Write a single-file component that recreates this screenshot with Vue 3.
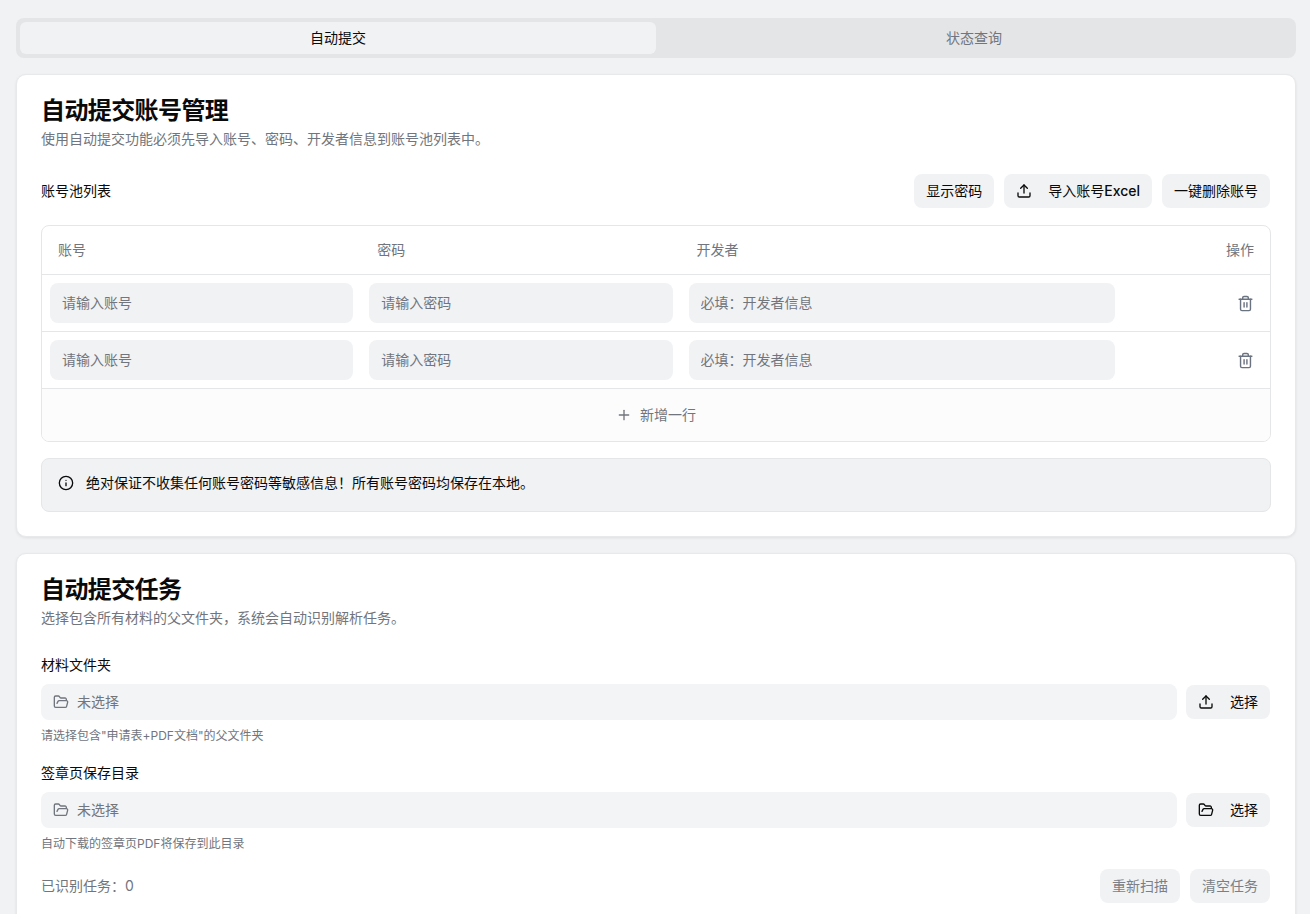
<script setup>
const rows = [1, 2]
const icons = {
  upload: ['M21 15v4a2 2 0 0 1-2 2H5a2 2 0 0 1-2-2v-4', 'M17 8l-5-5-5 5', 'M12 3v12'],
  folder: ['m6 14 1.5-2.9A2 2 0 0 1 9.24 10H20a2 2 0 0 1 1.94 2.5l-1.54 6a2 2 0 0 1-1.95 1.5H4a2 2 0 0 1-2-2V5a2 2 0 0 1 2-2h3.9a2 2 0 0 1 1.69.9l.81 1.2a2 2 0 0 0 1.67.9H18a2 2 0 0 1 2 2v2'],
  trash: ['M3 6h18', 'M19 6v14c0 1-1 2-2 2H7c-1 0-2-1-2-2V6', 'M8 6V4c0-1 1-2 2-2h4c1 0 2 1 2 2v2', 'M10 11v6', 'M14 11v6'],
  plus: ['M5 12h14', 'M12 5v14'],
  info: ['M22 12a10 10 0 1 1-20 0 10 10 0 0 1 20 0z', 'M12 16v-4', 'M12 8h.01'],
}
const fields = [
  { label: '材料文件夹', icon: 'upload', hint: '请选择包含"申请表+PDF文档"的父文件夹' },
  { label: '签章页保存目录', icon: 'folder', hint: '自动下载的签章页PDF将保存到此目录' },
]
</script>

<template>
  <div class="page">
    <div class="tabs">
      <div class="tab active">自动提交</div>
      <div class="tab">状态查询</div>
    </div>

    <section class="card first">
      <h2 class="title">自动提交账号管理</h2>
      <p class="sub">使用自动提交功能必须先导入账号、密码、开发者信息到账号池列表中。</p>

      <div class="toolbar">
        <span class="label">账号池列表</span>
        <div class="actions">
          <button class="btn">显示密码</button>
          <button class="btn">
            <svg class="ico" viewBox="0 0 24 24"><path v-for="d in icons.upload" :key="d" :d="d" /></svg>
            <span>导入账号<b class="latin">Excel</b></span>
          </button>
          <button class="btn">一键删除账号</button>
        </div>
      </div>

      <div class="table">
        <div class="grid head">
          <div class="th">账号</div>
          <div class="th">密码</div>
          <div class="th">开发者</div>
          <div class="th right">操作</div>
        </div>
        <div v-for="r in rows" :key="r" class="grid row">
          <div class="td"><input class="input" placeholder="请输入账号" /></div>
          <div class="td"><input class="input" placeholder="请输入密码" /></div>
          <div class="td"><input class="input" placeholder="必填：开发者信息" /></div>
          <div class="td op">
            <svg class="ico trash" viewBox="0 0 24 24"><path v-for="d in icons.trash" :key="d" :d="d" /></svg>
          </div>
        </div>
        <div class="add">
          <svg class="ico" viewBox="0 0 24 24"><path v-for="d in icons.plus" :key="d" :d="d" /></svg>
          新增一行
        </div>
      </div>

      <div class="alert">
        <svg class="ico" viewBox="0 0 24 24"><path v-for="d in icons.info" :key="d" :d="d" /></svg>
        <span>绝对保证不收集任何账号密码等敏感信息！所有账号密码均保存在本地。</span>
      </div>
    </section>

    <section class="card second">
      <h2 class="title">自动提交任务</h2>
      <p class="sub">选择包含所有材料的父文件夹，系统会自动识别解析任务。</p>

      <div class="fields">
        <div v-for="f in fields" :key="f.label" class="field">
          <div class="label">{{ f.label }}</div>
          <div class="picker">
            <div class="path">
              <svg class="ico" viewBox="0 0 24 24"><path v-for="d in icons.folder" :key="d" :d="d" /></svg>
              未选择
            </div>
            <button class="btn">
              <svg class="ico" viewBox="0 0 24 24"><path v-for="d in icons[f.icon]" :key="d" :d="d" /></svg>
              选择
            </button>
          </div>
          <div class="hint">{{ f.hint }}</div>
        </div>
      </div>

      <div class="footer">
        <span class="count">已识别任务：0</span>
        <div class="actions">
          <button class="btn disabled">重新扫描</button>
          <button class="btn disabled">清空任务</button>
        </div>
      </div>
    </section>
  </div>
</template>

<style scoped>
.page {
  display: flex;
  flex-direction: column;
  gap: 16px;
  padding: 18px 14px 40px 16px;
  font-family: Inter, "Noto Sans CJK SC", sans-serif;
  font-size: 14px;
  line-height: 20px;
  color: #0a0a0a;
}
.tabs {
  display: grid;
  grid-template-columns: 1fr 1fr;
  height: 40px;
  padding: 4px;
  box-sizing: border-box;
  background: #e4e5e7;
  border-radius: 8px;
}
.tab {
  display: flex;
  align-items: center;
  justify-content: center;
  border-radius: 6px;
  color: #71757d;
}
.tab.active {
  background: #f1f2f4;
  color: #0a0a0a;
}
.card {
  background: #fff;
  border: 1px solid #e8e9eb;
  border-radius: 10px;
  padding: 24px;
  box-shadow: 0 1px 3px rgba(0, 0, 0, 0.08);
}
.title {
  margin: 0;
  font-size: 24px;
  line-height: 24px;
  font-weight: 700;
  letter-spacing: -0.6px;
}
.sub {
  margin: 6px 0 0;
  color: #71757d;
}
.toolbar {
  display: flex;
  align-items: center;
  justify-content: space-between;
  margin-top: 25px;
}
.actions {
  display: flex;
  gap: 10px;
  margin-right: 1px;
}
.btn {
  display: inline-flex;
  align-items: center;
  gap: 16px;
  height: 34px;
  padding: 0 12px;
  border: 0;
  border-radius: 8px;
  background: #f1f2f4;
  color: #0a0a0a;
  font: inherit;
  white-space: nowrap;
}
.btn.disabled {
  color: #7b7f87;
}
.latin {
  font-weight: 500;
}
.ico {
  width: 16px;
  height: 16px;
  flex: none;
  fill: none;
  stroke: currentColor;
  stroke-width: 2;
  stroke-linecap: round;
  stroke-linejoin: round;
}
.table {
  margin-top: 17px;
  border: 1px solid #e5e6e8;
  border-radius: 8px;
  overflow: hidden;
}
.grid {
  display: grid;
  grid-template-columns: 26% 26% 36% 12%;
  border-bottom: 1px solid #e5e6e8;
}
.head {
  height: 49px;
  box-sizing: border-box;
  align-items: center;
}
.th {
  padding: 0 16px;
  color: #71757d;
}
.right {
  text-align: right;
}
.row {
  height: 57px;
  box-sizing: border-box;
  align-items: center;
}
.td {
  padding: 0 8px;
}
.input {
  display: block;
  width: 100%;
  height: 40px;
  box-sizing: border-box;
  padding: 0 12px 2px;
  border: 0;
  border-radius: 8px;
  background: #f1f2f4;
  font: inherit;
  outline: none;
}
.input::placeholder {
  color: #71757d;
}
.op {
  display: flex;
  justify-content: flex-end;
  padding-right: 16px;
}
.trash {
  width: 17px;
  height: 17px;
  color: #6b7280;
}
.add {
  display: flex;
  align-items: center;
  justify-content: center;
  gap: 8px;
  height: 52px;
  background: #fcfcfc;
  color: #71757d;
}
.alert {
  display: flex;
  align-items: center;
  gap: 12px;
  height: 54px;
  box-sizing: border-box;
  margin-top: 16px;
  padding: 0 16px 4px;
  background: #f1f2f4;
  border: 1px solid #e5e6e8;
  border-radius: 8px;
}
.fields {
  margin-top: 27px;
  display: flex;
  flex-direction: column;
  gap: 19px;
}
.picker {
  display: flex;
  align-items: center;
  gap: 9px;
  margin-top: 9px;
  padding-right: 1px;
}
.path {
  flex: 1;
  display: flex;
  align-items: center;
  gap: 8px;
  height: 36px;
  padding: 0 12px;
  border-radius: 8px;
  background: #f3f4f6;
  color: #71757d;
}
.hint {
  margin-top: 8px;
  font-size: 12px;
  line-height: 16px;
  color: #71757d;
}
.footer {
  display: flex;
  align-items: center;
  justify-content: space-between;
  margin-top: 17px;
}
.count {
  color: #71757d;
}
</style>

<style>
html,
body {
  margin: 0;
  background: #f1f2f4;
  overflow: hidden;
}
</style>
